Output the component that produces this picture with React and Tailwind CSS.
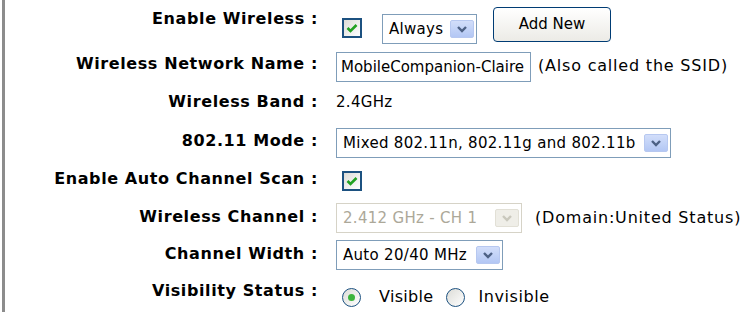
import React from "react";

const font = "font-['DejaVu_Sans',Verdana,sans-serif]";

const Arrow = ({ disabled }) => (
  <span
    className={`ml-auto mr-[2px] flex h-[18px] w-[24px] items-center justify-center rounded-[2px] border ${
      disabled
        ? "border-[#e2e0d6] bg-[#efeee8]"
        : "border-[#b7c8f0] bg-gradient-to-b from-[#d2defa] to-[#b3c7f4]"
    }`}
  >
    <svg width="12" height="8" viewBox="0 0 12 8">
      <polyline
        points="2,2 6,6 10,2"
        fill="none"
        stroke={disabled ? "#c9c8bd" : "#4d6185"}
        strokeWidth="2.4"
      />
    </svg>
  </span>
);

const Select = ({ text, width, disabled }) => (
  <div
    className={`flex h-[30px] items-center border bg-white pl-[6px] text-[15px] tracking-[0.3px] ${width} ${
      disabled ? "border-[#d6d3c7] text-[#aca899]" : "border-[#7f9db9] text-black"
    }`}
  >
    <span className="whitespace-nowrap">{text}</span>
    <Arrow disabled={disabled} />
  </div>
);

const Check = () => (
  <span className="flex h-[20px] w-[20px] items-center justify-center border-2 border-[#1c5180] bg-gradient-to-br from-[#dcdcd7] to-white">
    <svg width="12" height="10" viewBox="0 0 12 10">
      <polyline points="1.5,5 4.5,8 10.5,2" fill="none" stroke="#21a121" strokeWidth="2.6" />
    </svg>
  </span>
);

const Radio = ({ on }) => (
  <span className="flex h-[19px] w-[19px] items-center justify-center rounded-full border border-[#1c5180] bg-gradient-to-br from-[#dcdcd7] to-white">
    {on && <span className="h-[7px] w-[7px] rounded-full bg-[#3cb43c]" />}
  </span>
);

const Row = ({ h, label, lt, children }) => (
  <div className={`flex items-start ${h}`}>
    <div className={`w-[318px] shrink-0 whitespace-nowrap text-right text-[16px] font-bold leading-[20px] tracking-[0.6px] ${lt}`}>
      {label}
    </div>
    <div className="flex items-start pl-[18px]">{children}</div>
  </div>
);

const note = "whitespace-nowrap text-[16px] leading-[20px] tracking-[0.8px]";

export default function App() {
  return (
    <div className={`h-[312px] w-[743px] overflow-hidden bg-white pl-[2px] text-black ${font}`}>
      <div className="h-full border-l-[3px] border-l-[#8c8c8c]">
        <div className="-ml-[5px] flex flex-col">
          <Row h="h-[46px]" lt="mt-[9px]" label="Enable Wireless :">
            <div className="ml-[6px] mt-[18px]">
              <Check />
            </div>
            <div className="ml-[20px] mt-[14px]">
              <Select text="Always" width="w-[95px]" />
            </div>
            <button className="ml-[16px] mt-[7px] h-[35px] w-[118px] rounded-[4px] border border-[#003c74] bg-gradient-to-b from-white to-[#ecebe6] text-[15px] text-black">
              Add New
            </button>
          </Row>
          <Row h="h-[38px]" lt="mt-[8px]" label="Wireless Network Name :">
            <input
              readOnly
              value="MobileCompanion-Claire"
              className="mt-[6px] h-[30px] w-[195px] border border-[#7f9db9] px-[4px] text-[15px] outline-none"
            />
            <span className={`ml-[7px] mt-[10px] ${note}`}>(Also called the SSID)</span>
          </Row>
          <Row h="h-[36px]" lt="mt-[8px]" label="Wireless Band :">
            <span className="mt-[8px] text-[15px] leading-[20px] tracking-[0.3px]">2.4GHz</span>
          </Row>
          <Row h="h-[42px]" lt="mt-[11px]" label="802.11 Mode :">
            <div className="mt-[8px]">
              <Select text="Mixed 802.11n, 802.11g and 802.11b" width="w-[335px]" />
            </div>
          </Row>
          <Row h="h-[38px]" lt="mt-[7px]" label="Enable Auto Channel Scan :">
            <div className="ml-[6px] mt-[9px]">
              <Check />
            </div>
          </Row>
          <Row h="h-[37px]" lt="mt-[7px]" label="Wireless Channel :">
            <div className="mt-[3px]">
              <Select text="2.412 GHz - CH 1" width="w-[186px]" disabled />
            </div>
            <span className={`ml-[13px] mt-[8px] ${note}`}>(Domain:United Status)</span>
          </Row>
          <Row h="h-[38px]" lt="mt-[7px]" label="Channel Width :">
            <div className="mt-[3px]">
              <Select text="Auto 20/40 MHz" width="w-[167px]" />
            </div>
          </Row>
          <Row h="h-[37px]" lt="mt-[6px]" label="Visibility Status :">
            <div className="ml-[6px] mt-[12px] flex items-center">
              <Radio on />
              <span className="ml-[18px] text-[16px] leading-[20px] tracking-[0.3px]">Visible</span>
              <span className="ml-[13px]">
                <Radio />
              </span>
              <span className="ml-[13px] text-[16px] leading-[20px] tracking-[0.6px]">Invisible</span>
            </div>
          </Row>
        </div>
      </div>
    </div>
  );
}
